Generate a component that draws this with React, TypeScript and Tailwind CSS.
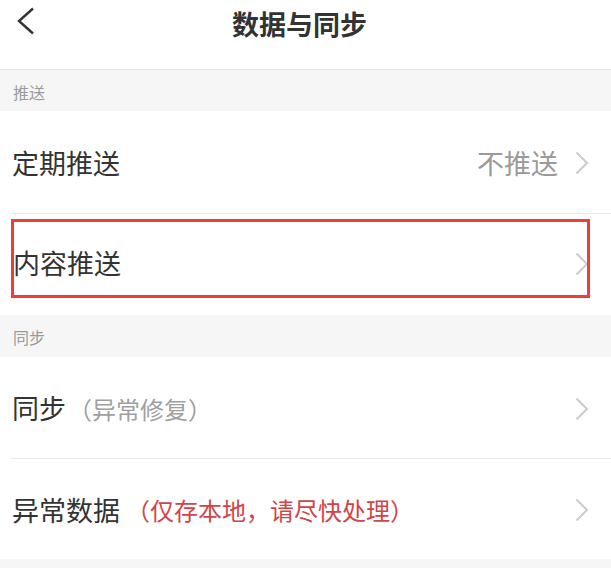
import React from 'react'

const font = { fontFamily: '"Noto Sans CJK SC", "Noto Sans", sans-serif' }

const Chevron = () => (
  <svg width="14" height="24" viewBox="0 0 14 24" fill="none" className="shrink-0">
    <path d="M1.5 1.5 L12 12 L1.5 22.5" stroke="#cbcbcb" strokeWidth="2" />
  </svg>
)

const SectionTitle = ({ title, h }: { title: string; h: string }) => (
  <div className={`${h} bg-[#f6f6f6] flex items-center pl-[13px] pt-[2px] text-[16px] text-[#9a9a9a]`}>
    {title}
  </div>
)

const App = () => {
  return (
    <div className="min-h-screen bg-[#f6f6f6] w-[611px]" style={font}>
      {/* header */}
      <div className="h-[70px] bg-white border-b border-[#e3e3e3] relative flex justify-center pr-[12px]">
        <button className="absolute left-[16px] top-[7px]">
          <svg width="20" height="28" viewBox="0 0 20 28" fill="none">
            <path d="M17 1.5 L3 14 L17 26.5" stroke="#333" strokeWidth="2.4" />
          </svg>
        </button>
        <h1 className="pt-[4px] text-[27px] leading-[40px] font-bold text-[#333]">数据与同步</h1>
      </div>

      <SectionTitle title="推送" h="h-[41px]" />

      <div className="bg-white">
        <div className="h-[102px] flex items-center pl-[12px] pr-[22px] pt-[2px]">
          <span className="flex-1 text-[27px] text-[#333]">定期推送</span>
          <span className="text-[27px] text-[#9a9a9a] mr-[17px]">不推送</span>
          <Chevron />
        </div>
        <div className="ml-[11px] h-px bg-[#ebebeb]" />
        <div className="h-[101px] relative flex items-center pl-[13px] pr-[22px] pb-[2px]">
          <span className="flex-1 text-[27px] text-[#333]">内容推送</span>
          <Chevron />
          <div className="absolute left-[11px] right-[21px] top-[5px] h-[79px] border-[3px] border-[#f23b3b]" />
        </div>
      </div>

      <SectionTitle title="同步" h="h-[42px]" />

      <div className="bg-white">
        <div className="h-[101px] flex items-center pl-[12px] pr-[22px] pt-[2px]">
          <span className="flex-1 flex items-center">
            <span className="text-[27px] text-[#333]">同步</span>
            <span className="text-[24px] text-[#9f9f9f] ml-[2px]">（异常修复）</span>
          </span>
          <Chevron />
        </div>
        <div className="ml-[11px] h-px bg-[#ebebeb]" />
        <div className="h-[100px] flex items-center pl-[12px] pr-[22px] pt-[2px]">
          <span className="flex-1 flex items-center">
            <span className="text-[27px] text-[#333]">异常数据</span>
            <span className="text-[24px] text-[#cf4548] ml-[6px]">（仅存本地，请尽快处理）</span>
          </span>
          <Chevron />
        </div>
      </div>
    </div>
  )
}

export default App
